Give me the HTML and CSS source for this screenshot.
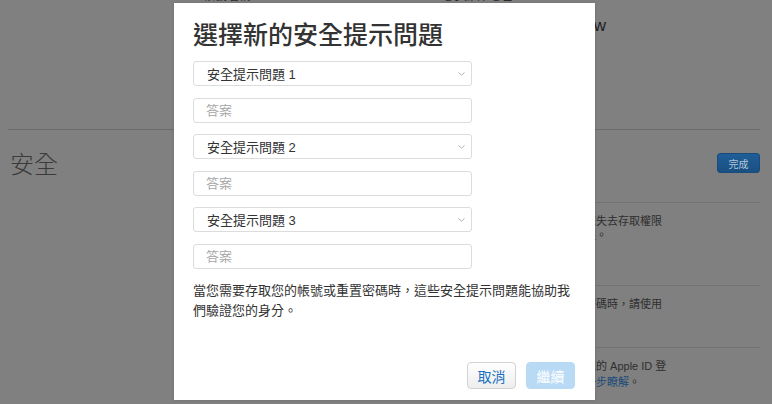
FILE: index.html
```html
<!DOCTYPE html>
<html lang="zh-Hant">
<head>
<meta charset="utf-8">
<title>選擇新的安全提示問題</title>
<link rel="stylesheet" href="styles.css">
</head>
<body>
<div class="page">
  <div class="peek"><span>帳號名稱</span><span class="peek-2">電子郵件地址</span></div>
  <div class="top"><span class="top-word">New</span></div>
  <div class="sec-head">
    <h2 class="sec-title">安全</h2>
    <button class="done">完成</button>
  </div>
  <div class="rows">
    <div class="row row-1"><p>萬一您失去存取權限<br>的權限。</p></div>
    <div class="row row-2"><p>忘記密碼時，請使用</p></div>
    <div class="row row-3"><p>如果您的 Apple ID 登<br>請進<a class="link">一步瞭解</a>。</p></div>
  </div>
</div>

<div class="modal" role="dialog" aria-labelledby="dlg-title">
  <h1 id="dlg-title" class="modal-title">選擇新的安全提示問題</h1>
  <div class="form">
    <div class="select"><span>安全提示問題 1</span><svg class="chev" width="7" height="4" viewBox="0 0 7 4"><path d="M0.5 0.5 L3.5 3.2 L6.5 0.5" fill="none" stroke="#b0b0b0" stroke-width="1"/></svg></div>
    <input class="answer" type="text" placeholder="答案">
    <div class="select"><span>安全提示問題 2</span><svg class="chev" width="7" height="4" viewBox="0 0 7 4"><path d="M0.5 0.5 L3.5 3.2 L6.5 0.5" fill="none" stroke="#b0b0b0" stroke-width="1"/></svg></div>
    <input class="answer" type="text" placeholder="答案">
    <div class="select"><span>安全提示問題 3</span><svg class="chev" width="7" height="4" viewBox="0 0 7 4"><path d="M0.5 0.5 L3.5 3.2 L6.5 0.5" fill="none" stroke="#b0b0b0" stroke-width="1"/></svg></div>
    <input class="answer" type="text" placeholder="答案">
  </div>
  <p class="note">當您需要存取您的帳號或重置密碼時，這些安全提示問題能協助我們驗證您的身分。</p>
  <div class="actions">
    <button class="btn btn-cancel">取消</button>
    <button class="btn btn-next">繼續</button>
  </div>
</div>
</body>
</html>
```
FILE: styles.css
```css
* { box-sizing: border-box; }

html, body {
  margin: 0;
  padding: 0;
  width: 772px;
  height: 404px;
  overflow: hidden;
  background: #808080;
  font-family: "Liberation Sans", "Noto Sans CJK TC", sans-serif;
  color: #262626;
}

/* ---------- dimmed background page ---------- */
.page {
  height: 404px;
  padding: 0 12px 0 8px;
  display: flex;
  flex-direction: column;
}

.peek {
  margin-top: -10px;
  height: 13px;
  font-size: 12px;
  line-height: 13px;
  padding-left: 195px;
  color: #2a2a2a;
  white-space: nowrap;
}
.peek-2 { margin-left: 189px; }

.top {
  height: 127px;
  border-bottom: 1px solid #6c6c6c;
  padding: 13px 0 0 564px;
}
.top-word {
  font-size: 17px;
  line-height: 20px;
  color: #1e1e1e;
}

.sec-head {
  display: flex;
  justify-content: space-between;
  align-items: flex-start;
  padding: 21px 0 0 2px;
}
.sec-title {
  margin: 0;
  font-size: 24px;
  line-height: 28px;
  font-weight: 300;
  color: #3a3a3a;
}
.done {
  margin-top: 2px;
  width: 43px;
  height: 20px;
  border: 1px solid #194c7c;
  border-radius: 3px;
  background: linear-gradient(#1f5e98, #195082);
  color: #b4c6d8;
  font-family: "Liberation Sans", "Noto Sans CJK TC", sans-serif;
  font-size: 10px;
  padding: 0;
}

.rows {
  margin: 23px 0 0 555px;
}
.row {
  border-top: 1px solid #737373;
  font-size: 11px;
  line-height: 14px;
  color: #2e2e2e;
  white-space: nowrap;
}
.row p { margin: 0; }
.row-1 { height: 83px; padding-top: 11px; }
.row-2 { height: 62px; padding-top: 11px; }
.row-3 { padding-top: 10px; line-height: 16px; }
.link { color: #1b4b78; }

/* ---------- modal ---------- */
.modal {
  position: absolute;
  left: 174px;
  top: 3px;
  width: 421px;
  height: 397px;
  background: #fff;
  padding: 17px 20px 11px 19px;
  display: flex;
  flex-direction: column;
  box-shadow: 0 0 3px rgba(0, 0, 0, 0.15);
}

.modal-title {
  margin: 0;
  font-size: 25px;
  line-height: 30px;
  font-weight: 500;
  color: #333;
  white-space: nowrap;
}

.form {
  margin-top: 11px;
  width: 279px;
  display: grid;
  grid-auto-rows: 25px;
  row-gap: 11.6px;
}

.select {
  display: flex;
  align-items: center;
  justify-content: space-between;
  border: 1px solid #dcdcdc;
  border-radius: 3px;
  padding: 0 6px 0 13px;
  font-size: 13px;
  color: #333;
  background: #fff;
}
.chev { display: block; margin-top: 1px; }

.answer {
  width: 100%;
  height: 25px;
  margin: 0;
  border: 1px solid #dcdcdc;
  border-radius: 3px;
  padding: 0 0 0 12px;
  font-family: "Liberation Sans", "Noto Sans CJK TC", sans-serif;
  font-size: 13px;
  color: #333;
  background: #fff;
  outline: none;
}
.answer::placeholder { color: #a6a6a6; }

.note {
  margin: 12px 0 0;
  font-size: 13px;
  line-height: 20px;
  color: #333;
}

.actions {
  margin-top: auto;
  display: flex;
  justify-content: flex-end;
  gap: 10px;
}
.btn {
  width: 49px;
  height: 27px;
  padding: 0;
  border-radius: 4px;
  font-family: "Liberation Sans", "Noto Sans CJK TC", sans-serif;
  font-size: 14px;
}
.btn-cancel {
  border: 1px solid #d2d2d2;
  background: linear-gradient(#ffffff, #ededed);
  color: #1a6fc0;
}
.btn-next {
  border: 1px solid #b9daf5;
  background: #b9daf5;
  color: #fff;
}
```
